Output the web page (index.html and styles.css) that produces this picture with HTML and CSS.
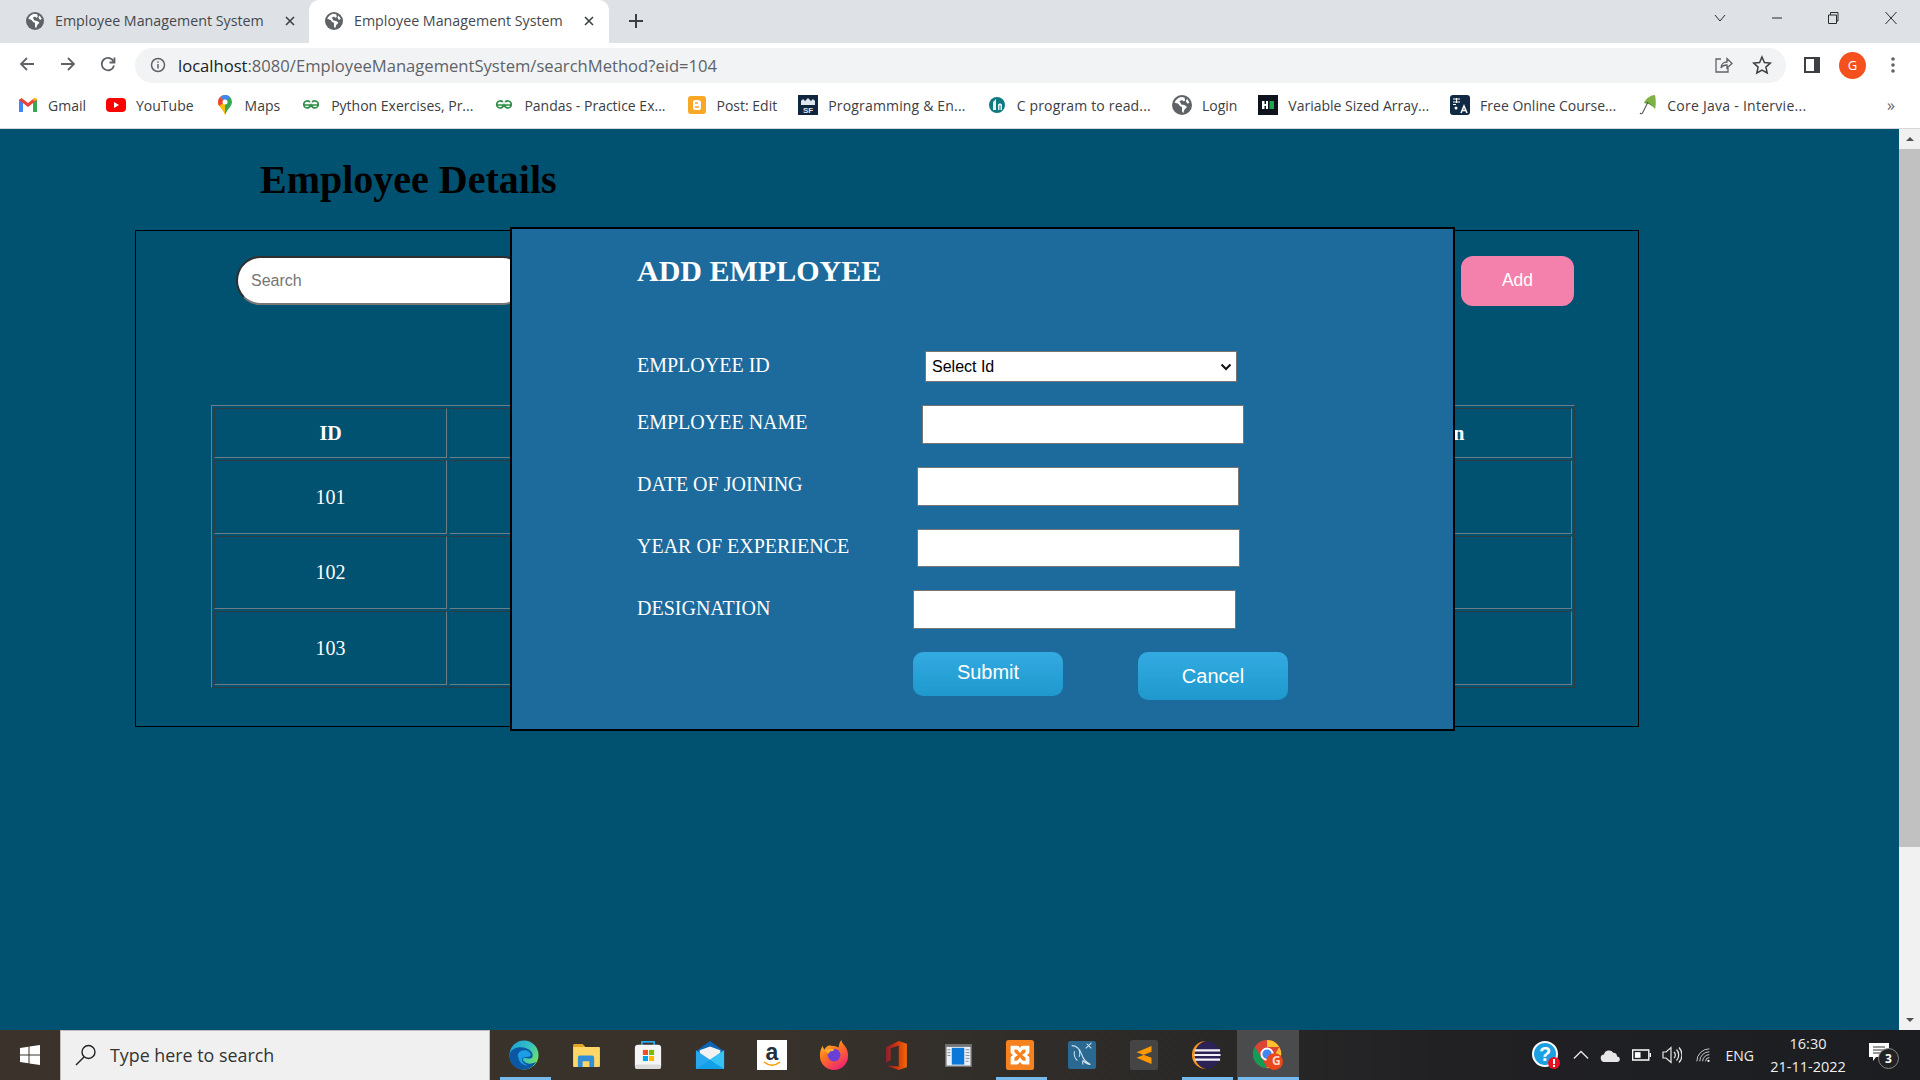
FILE: index.html
```html
<!DOCTYPE html>
<html lang="en">
<head>
<meta charset="utf-8">
<title>Employee Management System</title>
<link rel="stylesheet" href="styles.css">
</head>
<body>
<div class="tabstrip">
  <div class="tab tab-first">
    <svg class="fav" viewBox="0 0 16 16"><use href="#globe"/></svg>
    <span class="tab-title">Employee Management System</span>
    <svg class="tab-x" viewBox="0 0 12 12"><path d="M2 2l8 8M10 2l-8 8"/></svg>
  </div>
  <div class="tab tab-active">
    <svg class="fav" viewBox="0 0 16 16"><use href="#globe"/></svg>
    <span class="tab-title">Employee Management System</span>
    <svg class="tab-x" viewBox="0 0 12 12"><path d="M2 2l8 8M10 2l-8 8"/></svg>
  </div>
  <svg class="new-tab" viewBox="0 0 16 16"><path d="M8 1v14M1 8h14"/></svg>
  <div class="win-controls">
    <svg class="wc wc-chev" viewBox="0 0 14 14"><path d="M2 4l5 6 5-6"/></svg>
    <svg class="wc" viewBox="0 0 14 14"><path d="M2 7h10"/></svg>
    <svg class="wc wc-max" viewBox="0 0 14 14"><path d="M2.500 4h8v8.500h-8zM4.500 4V1.500h7.500v8.500h-1.500"/></svg>
    <svg class="wc" viewBox="0 0 14 14"><path d="M1.500 1l11 12M12.500 1l-11 12"/></svg>
  </div>
</div>
<div class="toolbar">
  <svg class="nav" viewBox="0 0 18 18"><path d="M16 9H3M9 3L3 9l6 6"/></svg>
  <svg class="nav" viewBox="0 0 18 18"><path d="M2 9h13M9 3l6 6-6 6"/></svg>
  <svg class="nav" viewBox="0 0 18 18"><path d="M14.800 7A6.200 6.200 0 1 0 15 10.500M15.500 2.500V7.500H10.500"/></svg>
  <div class="omnibox">
    <svg class="info" viewBox="0 0 16 16"><circle cx="8" cy="8" r="6.500"/><path d="M8 7v4.500M8 4.300v1.500"/></svg>
    <span class="url"><span class="url-host">localhost</span>:8080/EmployeeManagementSystem/searchMethod?eid=104</span>
    <svg class="omni-act share" viewBox="0 0 20 20"><path d="M8 4H3v13h12v-4M8 13c0-4 3-6 6-6V3.500L19 8.500l-5 4.500V10c-3 0-5 1-6 3z"/></svg>
    <svg class="omni-act star" viewBox="0 0 20 20"><path d="M10 2l2.400 5.500 5.900.600-4.400 4 1.300 5.900L10 15l-5.200 3 1.300-5.900-4.400-4 5.900-.600z"/></svg>
  </div>
  <svg class="panel-ico" viewBox="0 0 18 18"><path d="M1 1h16v16H1z" fill="#3c4043"/><path d="M3 3h8v12H3z" fill="#fff"/></svg>
  <div class="avatar">G</div>
  <svg class="dots" viewBox="0 0 4 18"><circle cx="2" cy="3" r="1.800"/><circle cx="2" cy="9" r="1.800"/><circle cx="2" cy="15" r="1.800"/></svg>
</div>
<div class="bookmarks">
  <div class="bm bm-gmail"><svg class="bm-ico" viewBox="0 0 20 20"><g transform="translate(0 2)"><path d="M1 15V3l2.500-1.500L5 4v11z" fill="#4285f4"/><path d="M15 15V4l1.500-2.500L19 3v12z" fill="#34a853"/><path d="M1 3l9 7 9-7-2.500-2L10 6 3.500 1z" fill="#ea4335"/><path d="M15 4l4-1-.5-1.500L16 1z" fill="#fbbc04"/></g></svg><span>Gmail</span></div>
  <div class="bm"><svg class="bm-ico" viewBox="0 0 20 20"><rect x="0" y="3" width="20" height="14" rx="4" fill="#f00"/><path d="M8 7l5 3-5 3z" fill="#fff"/></svg><span>YouTube</span></div>
  <div class="bm"><svg class="bm-ico" viewBox="0 0 20 20"><path d="M10 0a7 7 0 0 0-7 7c0 4.500 5 7 7 13z" fill="#fbbc04"/><path d="M10 0a7 7 0 0 1 7 7c0 4.500-5 7-7 13z" fill="#34a853"/><path d="M5 2a7 7 0 0 1 10 0l-5 5z" fill="#4285f4"/><path d="M3 7a7 7 0 0 1 2-5l5 5-6 4a8 8 0 0 1-1-4z" fill="#ea4335"/><circle cx="10" cy="7" r="2.500" fill="#fff"/></svg><span>Maps</span></div>
  <div class="bm"><svg class="bm-ico" viewBox="0 0 20 20"><use href="#gfg"/></svg><span>Python Exercises, Pr...</span></div>
  <div class="bm"><svg class="bm-ico" viewBox="0 0 20 20"><use href="#gfg"/></svg><span>Pandas - Practice Ex...</span></div>
  <div class="bm"><svg class="bm-ico" viewBox="-1 -1 20 20"><rect width="18" height="18" rx="3" fill="#f9a825"/><path d="M5 6a2 2 0 0 1 2-2h3a3 3 0 0 1 3 3v5a2 2 0 0 1-2 2H7a2 2 0 0 1-2-2z" fill="#fff"/><path d="M7 7h3M7 11h4" stroke="#f9a825" stroke-width="1.500"/></svg><span>Post: Edit</span></div>
  <div class="bm"><svg class="bm-ico" viewBox="0 0 20 20"><rect width="20" height="20" fill="#10263f"/><path d="M3 10V6l2-2 2 2 3-3 3 3 2-2 2 2v4z" fill="#dfe7ee"/><text x="10" y="17.500" class="sf-text">SF</text></svg><span class="ls-a">Programming &amp; En...</span></div>
  <div class="bm"><svg class="bm-ico" viewBox="0 0 20 20"><circle cx="10" cy="10" r="8" fill="#0f7a80"/><path d="M6 15V7l3-3v11zM11 15v-5c0-2 4-2 4 0v5h-1.500v-4.500h-1V15z" fill="#e4f4f4"/></svg><span class="ls-a">C program to read...</span></div>
  <div class="bm"><svg class="bm-ico" viewBox="0 0 16 16"><use href="#globe"/></svg><span>Login</span></div>
  <div class="bm"><svg class="bm-ico" viewBox="0 0 20 20"><rect width="20" height="20" fill="#0e141e"/><path d="M4 6h2.500v8H4zM8 6h2v8H8zM6 9h3v2H6z" fill="#fff"/><path d="M11.500 6H16v8h-4.500z" fill="#1ba94c"/></svg><span>Variable Sized Array...</span></div>
  <div class="bm"><svg class="bm-ico" viewBox="0 0 20 20"><rect width="20" height="20" rx="3" fill="#102a43"/><path d="M3 4h7M6.500 3v5M3 7h7M3 9.500h3" stroke="#fff" stroke-width="1.100"/><circle cx="6" cy="13" r="1.500" fill="#fff"/><path d="M11 18l3-7 3 7M12.200 15.500h3.600" stroke="#fff" stroke-width="1.500" fill="none"/></svg><span>Free Online Course...</span></div>
  <div class="bm"><svg class="bm-ico" viewBox="0 0 20 20"><path d="M7 8C9 3 14 0 18 0c1 5 1 11 0 14-2-3-6-6-11-6z" fill="#7cb342"/><path d="M7 8c3-1 6 0 8 2l3 4c-2-3-6-6-11-6z" fill="#558b2f"/><path d="M3 18c1 1 2 1 2.500 0L11 7" stroke="#555" stroke-width="1.100" fill="none"/></svg><span class="ls-b">Core Java - Intervie...</span></div>
  <span class="bm-more">»</span>
</div>

<div class="viewport">
  <main class="page">
    <h1 class="page-title">Employee Details</h1>
    <section class="panel">
      <div class="panel-top">
        <input class="search" type="text" placeholder="Search">
        <button class="add-btn" type="button">Add</button>
      </div>
      <table class="emp-table">
        <thead>
          <tr><th class="col-id">ID</th><th></th><th class="col-action">Action</th></tr>
        </thead>
        <tbody>
          <tr class="row-a"><td>101</td><td></td><td></td></tr>
          <tr class="row-b"><td>102</td><td></td><td></td></tr>
          <tr class="row-a"><td>103</td><td></td><td></td></tr>
        </tbody>
      </table>
    </section>
    <form class="modal">
      <h2 class="modal-title">ADD EMPLOYEE</h2>
      <div class="form-row"><label class="lbl lbl-id">EMPLOYEE ID</label><select class="sel"><option>Select Id</option></select></div>
      <div class="form-row"><label class="lbl lbl-name">EMPLOYEE NAME</label><input class="fld" type="text"></div>
      <div class="form-row"><label class="lbl lbl-date">DATE OF JOINING</label><input class="fld" type="text"></div>
      <div class="form-row"><label class="lbl lbl-date">YEAR OF EXPERIENCE</label><input class="fld fld-wide fld-short" type="text"></div>
      <div class="form-row"><label class="lbl lbl-des">DESIGNATION</label><input class="fld fld-wide" type="text"></div>
      <div class="btn-row">
        <button class="blue-btn btn-submit" type="button">Submit</button>
        <button class="blue-btn btn-cancel" type="button">Cancel</button>
      </div>
    </form>
  </main>
  <div class="scrollbar">
    <div class="sb-arrow"><svg viewBox="0 0 10 10"><path d="M1 7l4-4 4 4z"/></svg></div>
    <div class="sb-track"><div class="sb-thumb"></div></div>
    <div class="sb-arrow"><svg viewBox="0 0 10 10"><path d="M1 3l4 4 4-4z"/></svg></div>
  </div>
</div>

<footer class="taskbar">
  <div class="start"><svg viewBox="0 0 20 20"><path d="M0 3l8.500-1.200V9.500H0zM9.500 1.600L20 0v9.500H9.500zM0 10.500h8.500v7.700L0 17zM9.500 10.500H20V20L9.500 18.400z" fill="#fff"/></svg></div>
  <div class="task-search">
    <svg viewBox="0 0 22 22"><circle cx="13.500" cy="8" r="6.500"/><path d="M9 13l-8 8"/></svg>
    <span>Type here to search</span>
  </div>
  <div class="task-icons">
    <div class="ti on"><svg viewBox="0 0 32 32"><defs><linearGradient id="e1" x1="0" y1="0" x2="1" y2=".6"><stop offset="0" stop-color="#1a9fdf"/><stop offset=".6" stop-color="#35c1c1"/><stop offset="1" stop-color="#6fe06a"/></linearGradient></defs><circle cx="16" cy="16" r="15.500" fill="url(#e1)"/><path d="M.5 16C2 8 12 6 19 9c5 2 7 6 6 9-1 2-5 2-8 1-2 0-3 2-1 4 3 3 9 3 13 0-3 6-8 8.500-13 8.500C7 31.500 0 25 .5 16z" fill="#0b57a4"/><path d="M10 19c-2-6 3-9 8-8 4 1 6 4 5 6-1 1-4 1-6 1-3 0-4 3-2 6 2 2 4 3 6 3-6 1-10-3-11-8z" fill="#1c9ee4"/></svg></div>
    <div class="ti"><svg class="ico-folder" viewBox="0 0 28 24"><path d="M0 1.500A1.500 1.500 0 0 1 1.500 0H10l3 3H0z" fill="#e0a526"/><path d="M0 3h27a1 1 0 0 1 1 1v19a1 1 0 0 1-1 1H1a1 1 0 0 1-1-1z" fill="#ffd766"/><path d="M5 24V14a2 2 0 0 1 2-2h13a2 2 0 0 1 2 2v10h-5v-6h-7v6z" fill="#2f8fd8"/></svg></div>
    <div class="ti"><svg viewBox="0 0 32 32"><path d="M9.500 7V2h13v5" fill="none" stroke="#29a8f0" stroke-width="1.800"/><rect x="2" y="5" width="28" height="26" rx="3.500" fill="#f5f5f5"/><rect x="2" y="26" width="28" height="5" rx="2.500" fill="#dcdcdc"/><rect x="10" y="10" width="12" height="13" fill="#fff"/><rect x="10.500" y="10.500" width="5.500" height="5.500" fill="#f25022"/><rect x="17" y="10.500" width="5.500" height="5.500" fill="#7fba00"/><rect x="10.500" y="17" width="5.500" height="5.500" fill="#00a4ef"/><rect x="17" y="17" width="5.500" height="5.500" fill="#ffb900"/></svg></div>
    <div class="ti"><svg viewBox="0 0 32 32"><path d="M1 12L16 1l15 11v19H1z" fill="#0d63b5"/><path d="M5 11l11-4 11 4v8l-11 7-11-7z" fill="#f2f2f2"/><path d="M1 11l15 10 15-10v19a1 1 0 0 1-1 1H2a1 1 0 0 1-1-1z" fill="#2aa8ee"/><path d="M1 31l15-10 15 10z" fill="#13a0e8"/><path d="M31 11v20L16 21z" fill="#36c3f4"/></svg></div>
    <div class="ti"><div class="amz"><span>a</span><svg viewBox="0 0 20 6"><path d="M2 1c5 4 11 4 16 0" fill="none" stroke="#f90" stroke-width="1.600"/></svg></div></div>
    <div class="ti"><svg viewBox="0 0 32 32"><defs><linearGradient id="f1" x1="0" y1="0" x2=".6" y2="1"><stop offset="0" stop-color="#ffd23f"/><stop offset=".45" stop-color="#ff7a1a"/><stop offset="1" stop-color="#f0286e"/></linearGradient></defs><path d="M1 17C1 12 2 9 4 6c0 2 1 3 2 4 1-3 4-5 7-4 4 0 6 1 8 2 0-3 1-6 3-8 0 3 2 4 4 7s3 6 3 10a15 15 0 0 1-30 0z" fill="url(#f1)"/><circle cx="16" cy="16" r="6.800" fill="#6a3fd8"/><path d="M6 11c3-1 8-2 10-1 1 1-2 2-4 2l-2 3c-1-2-3-3-4-4z" fill="#ffb02e"/></svg></div>
    <div class="ti"><svg class="ico-office" viewBox="0 0 24 32"><defs><linearGradient id="o1" x1="0" y1="0" x2="1" y2="0"><stop offset="0" stop-color="#8f1f2d"/><stop offset=".5" stop-color="#d3310f"/><stop offset="1" stop-color="#f06a07"/></linearGradient></defs><path d="M1 7L15 0l9 3v26l-9 3L1 27l14 1V5L6 8v13l-5 3z" fill="url(#o1)"/></svg></div>
    <div class="ti"><svg class="ico-win" viewBox="0 0 28 24"><rect width="28" height="24" fill="#6f7175"/><rect x="1.500" y="3" width="25" height="19.500" fill="#eceff3"/><rect x="7" y="4" width="13" height="17.500" fill="#0a78d9"/><path d="M2.500 6h3M2.500 9h3M2.500 12h3M21.500 6h4M21.500 9h4M21.500 12h4M21.500 15h4M21.500 18h3" stroke="#8a8d92"/></svg></div>
    <div class="ti on"><svg viewBox="0 0 32 32"><rect x="1" y="0" width="30" height="32" rx="3" fill="#f5811f"/><path d="M6 6h7c2 0 3 2 3 3 0-1 1-3 3-3h7v7c0 2-3 3-3 3s3 1 3 3v7h-7c-2 0-3-3-3-3s-1 3-3 3H6v-7c0-2 3-3 3-3s-3-1-3-3z" fill="#fff"/><path d="M10 10h2c2 0 4 4 4 4s2-4 4-4h2v2c0 2-4 4-4 4s4 2 4 4v2h-2c-2 0-4-4-4-4s-2 4-4 4h-2v-2c0-2 4-4 4-4s-4-2-4-4z" fill="#f5811f"/></svg></div>
    <div class="ti"><svg viewBox="0 0 32 32"><rect x="1" y="1" width="30" height="30" rx="3" fill="#2a6a92"/><path d="M5 6c5 0 9 4 11 10 1 4 3 7 9 10-4 0-6-2-8-4-1 2 0 3 0 4M8 12c-1 4 0 7 3 10M12 9c2 3 2 6 1 9M21 4l5 5M26 3l-6 6" fill="none" stroke="#cfe3ee" stroke-width="1.100"/></svg></div>
    <div class="ti"><svg viewBox="0 0 32 32"><rect x="1" y="0" width="30" height="32" rx="3" fill="#454545"/><path d="M8 13l16-6.500v6L8 19zM24 19L8 13v6l16 6.500z" fill="#ff9800"/></svg></div>
    <div class="ti on"><svg viewBox="0 0 32 32"><circle cx="17" cy="16" r="14.500" fill="#2c2255"/><path d="M1 16A15 15 0 0 1 16 1C8 3 4 9 4 16s4 13 12 15A15 15 0 0 1 1 16z" fill="#f7941e"/><path d="M4 11h27M3.500 16h28M4 21h27" stroke="#f2f2f8" stroke-width="2.300"/></svg></div>
    <div class="ti on ti-active"><svg viewBox="0 0 32 32"><circle cx="15" cy="15" r="15" fill="#db4437"/><path d="M15 0a15 15 0 0 1 13 7.500H15z" fill="#fbc02d"/><path d="M28 7.500A15 15 0 0 1 15 30l6.500-11.300z" fill="#fbc02d"/><path d="M2 7.500l7 11.500 6 11A15 15 0 0 1 2 7.500z" fill="#0f9d58"/><circle cx="15" cy="15" r="6" fill="#4285f4" stroke="#fff" stroke-width="2"/><circle cx="23" cy="23" r="9" fill="#e8481c"/></svg><span class="chrome-g">G</span></div>
  </div>
  <div class="tray">
    <div class="help"><svg viewBox="0 0 28 28"><circle cx="13" cy="13" r="12" fill="#1ba1e2" stroke="#fff" stroke-width="2"/><circle cx="22" cy="22" r="6" fill="#e81123"/><rect x="21" y="18" width="2" height="5" fill="#fff"/><rect x="21" y="24" width="2" height="2" fill="#fff"/></svg><span>?</span></div>
    <svg class="tray-ico chev" viewBox="0 0 18 18"><path d="M1 13l8-8 8 8"/></svg>
    <svg class="tray-ico cloud" viewBox="0 0 22 14"><path d="M5 14a4 4 0 0 1-1-8 5.500 5.500 0 0 1 10-2 4 4 0 0 1 4 4 3 3 0 0 1 0 6z" fill="#e6e6e6"/></svg>
    <svg class="tray-ico batt" viewBox="0 0 20 12"><path d="M.7.700h17v10.600H.7z"/><path d="M3 3h6v6H3z" fill="#fff" stroke="none"/><path d="M18.500 4h1.500v4h-1.500z" fill="#fff" stroke="none"/></svg>
    <svg class="tray-ico vol" viewBox="0 0 20 18"><path d="M1 6h3l5-4.500v15L4 12H1zM12 6a4 4 0 0 1 0 6M14.500 3.500a8 8 0 0 1 0 11M17 1.500a11 11 0 0 1 0 15"/></svg>
    <svg class="tray-ico wifi" viewBox="0 0 18 18"><path d="M1 16A15 15 0 0 1 16 1M4.500 16A11.500 11.500 0 0 1 16 4.500M8 16a8 8 0 0 1 8-8M11.500 16a4.500 4.500 0 0 1 4.500-4.500"/><circle cx="15" cy="15.500" r="1.300" fill="#fff" stroke="none"/></svg>
    <span class="lang">ENG</span>
    <div class="clock"><span>16:30</span><span>21-11-2022</span></div>
    <div class="notif"><svg viewBox="0 0 20 18"><path d="M0 0h20v14H7l-3 4v-4H0z" fill="#fff"/><path d="M4 4h12M4 7h12M4 10h8" stroke="#333" stroke-width="1"/></svg><span class="notif-n">3</span></div>
  </div>
</footer>

<svg class="defs" width="0" height="0">
  <defs>
    <symbol id="globe" viewBox="0 0 16 16"><circle cx="8" cy="8" r="8" fill="#5f6368"/><path d="M7 1.500C5 2 3 3.500 2 6l3 1 1.500 2 1.500.500v3.500l1 1.500 1-3 2-2-2-1.500-2.500-.500L6 5l2-1 1 1 1.500-.500-.5-2.500z" fill="#fff"/><path d="M12 3l2 3-1.500 1-1.500-2z" fill="#fff"/></symbol>
    <symbol id="gfg" viewBox="0 0 20 20"><path d="M10 10H3.500M10 10h6.500M9 7C7 5.500 4 5.500 3 8c-1 3 1 5 3 5s3-1 4-3c1 2 2 3 4 3s4-2 3-5c-1-2.500-4-2.500-6-1" fill="none" stroke="#2f8d46" stroke-width="1.700"/></symbol>
  </defs>
</svg>
</body>
</html>
```
FILE: styles.css
```css
* { box-sizing: border-box; }
html, body { margin: 0; height: 100%; overflow: hidden; }
body {
  width: 1920px; height: 1080px;
  display: flex; flex-direction: column;
  font-family: "Open Sans", "Liberation Sans", sans-serif;
  background: #015270;
}
.defs { position: absolute; }

/* browser chrome */
.tabstrip {
  height: 43px; flex: none;
  display: flex; align-items: flex-end;
  background: #dee1e6;
  padding-left: 9px;
}
.tab {
  width: 300px; height: 43px;
  display: flex; align-items: center;
  padding: 0 0 2px 17px;
  color: #45494d;
  font-size: 14.250px;
}
.tab-active { background: #fff; border-radius: 10px 10px 0 0; padding-left: 16px; }
.fav { width: 18px; height: 18px; flex: none; }
.tab-title { margin-left: 11px; width: 208px; white-space: nowrap; }
.tab-x { width: 12px; height: 12px; margin-left: 21px; fill: none; stroke: #3c4043; stroke-width: 1.600; }
.new-tab { width: 16px; height: 16px; margin: 0 0 14px 19px; stroke: #3c4043; stroke-width: 2; fill: none; }
.win-controls { margin-left: auto; display: flex; align-items: center; align-self: flex-start; gap: 42px; padding: 11px 22px 0 0; }
.wc { width: 14px; height: 14px; stroke: #2b2b2b; stroke-width: 1; fill: none; }
.wc-chev { margin-right: 1px; }
.wc-max { margin-right: 2px; }

.toolbar {
  height: 41px; flex: none;
  display: flex; align-items: center;
  background: #fff;
  padding: 0 0 0 18px;
}
.nav { width: 18px; height: 18px; margin-right: 22.500px; stroke: #5f6368; stroke-width: 1.800; fill: none; flex: none; }
.omnibox {
  width: 1651px; height: 35px; margin: 3px 0 0 -4.500px; flex: none;
  background: #f1f3f4; border-radius: 18px;
  display: flex; align-items: center;
  padding: 0 14px 0 15px;
}
.info { width: 16px; height: 16px; stroke: #5f6368; stroke-width: 1.500; fill: none; flex: none; }
.url { margin-left: 12px; font-size: 16.600px; color: #5f6368; white-space: nowrap; }
.url-host { color: #202124; }
.omni-act { width: 20px; height: 20px; stroke: #5f6368; stroke-width: 1.300; fill: none; flex: none; }
.share { margin-left: auto; }
.star { margin-left: 19px; stroke: #3c4043; stroke-width: 1.500; }
.panel-ico { width: 18px; height: 18px; margin: 3px 0 0 17px; flex: none; }
.avatar {
  width: 27px; height: 27px; margin: 3px 0 0 18px; flex: none;
  border-radius: 50%; background: #f4511e; color: #fff;
  font-size: 13px; display: flex; align-items: center; justify-content: center;
}
.dots { width: 4px; height: 18px; margin: 3px 0 0 25px; fill: #5f6368; flex: none; }

.bookmarks {
  height: 45px; flex: none;
  display: flex; align-items: center; gap: 21px;
  background: #fff;
  padding: 0 0 2px 18px;
  color: #3c4043;
  font-size: 14px;
  border-bottom: 1px solid #d5d7da;
}
.bm { display: flex; align-items: center; gap: 10px; white-space: nowrap; }
.bm-gmail { margin-right: -1px; }
.bm-ico { width: 20px; height: 20px; flex: none; }
.ls-a { letter-spacing: .17px; }
.ls-b { letter-spacing: .27px; }
.sf-text { font: bold 8px "Liberation Sans", sans-serif; fill: #dfe7ee; text-anchor: middle; }
.bm-more { margin-left: auto; margin-right: 25px; font-size: 16px; color: #5f6368; }

/* page */
.viewport { flex: 1; display: flex; min-height: 0; }
.page { flex: 1; position: relative; background: #015270; padding: 0 0 0 135px; }
.page-title {
  margin: 24px 0 0 125px;
  font: bold 40px/54px "Liberation Serif", serif;
  color: #000;
}
.panel {
  width: 1504px; height: 497px; margin-top: 23px;
  border: 1px solid #000;
  padding: 25px 64px 0 100px;
}
.panel-top { display: flex; justify-content: space-between; align-items: flex-start; }
.search {
  width: 291px; height: 49px;
  border-radius: 25px;
  border: 2px solid; border-color: #2f2f2f #777 #777 #2f2f2f;
  background: #fff;
  padding: 0 13px;
  font: 16px "Liberation Sans", sans-serif;
}
.search::placeholder { color: #757575; }
.add-btn {
  width: 113px; height: 50px;
  border: 0; border-radius: 12px; padding: 0 0 2px;
  background: #f481ac; color: #fff;
  font: 17.500px "Liberation Sans", sans-serif;
}
.emp-table {
  width: 1364px; margin: 99px 0 0 -25px;
  table-layout: fixed;
  border-collapse: separate; border-spacing: 2px;
  border: 1px solid; border-color: #6d7d86 #2f3b42 #2f3b42 #6d7d86;
  color: #fff;
  font: 20px "Liberation Serif", serif;
}
.emp-table th, .emp-table td {
  padding: 0; text-align: center;
  border: 1px solid; border-color: #2f3b42 #6d7d86 #6d7d86 #2f3b42;
}
.emp-table th { height: 50px; font-weight: bold; }
.col-id { width: 233px; }
.col-action { width: 272px; }
.row-a td { height: 74px; }
.row-b td { height: 73px; }

.modal {
  position: absolute; left: 510px; top: 98px;
  width: 945px; height: 504px;
  background: #1d6a9c;
  border: 2px solid #000;
  padding: 0 0 0 125px;
  color: #fff;
  font-family: "Liberation Serif", serif;
}
.modal-title { margin: 22px 0 0; font: bold 30px/40px "Liberation Serif", serif; }
.form-row { display: flex; align-items: center; margin-top: 23px; font-size: 20px; }
.modal-title + .form-row { margin-top: 60px; }
.lbl { margin-bottom: 4px; flex: none; }
.lbl-id { width: 288px; margin-bottom: 2px; }
.lbl-name { width: 285px; }
.lbl-date { width: 280px; }
.lbl-des { width: 276px; margin-bottom: 2px; }
.sel {
  width: 312px; height: 31px; padding: 0 2px 0 6px;
  background: #fff url("data:image/svg+xml,%3Csvg xmlns='http://www.w3.org/2000/svg' width='12' height='8'%3E%3Cpath d='M1.500 1.500L6 6l4.500-4.500' fill='none' stroke='%23111' stroke-width='2'/%3E%3C/svg%3E") no-repeat right 4px center;
  appearance: none;
  color: #000;
  border: 1px solid #767676; border-radius: 0;
  font: 16px "Liberation Sans", sans-serif;
}
.fld {
  width: 322px; height: 39px;
  background: #fff;
  border: 1px solid #767676;
  border-radius: 0;
}
.fld-wide { width: 323px; }
.fld-short { height: 38px; }
.btn-row { display: flex; align-items: flex-start; gap: 75px; margin: 23px 0 0 276px; }
.blue-btn {
  width: 150px; border: 0; border-radius: 10px;
  background: linear-gradient(#33abe2, #1e98cd);
  color: #fff;
  font: 20px "Liberation Sans", sans-serif;
}
.btn-submit { height: 44px; padding-bottom: 4px; }
.btn-cancel { height: 48px; }

.scrollbar { width: 21px; flex: none; background: #f1f1f1; display: flex; flex-direction: column; }
.sb-arrow { height: 20px; flex: none; display: flex; align-items: center; justify-content: center; }
.sb-arrow svg { width: 10px; height: 10px; fill: #505050; }
.sb-track { flex: 1; }
.sb-thumb { height: 698px; background: #c1c1c1; }

/* taskbar */
.taskbar {
  height: 50px; flex: none;
  display: flex; align-items: stretch;
  background: linear-gradient(90deg, #3b332b 0%, #38322b 40%, #2c2a28 60%, #212124 75%, #1b1d20 100%);
  color: #fff;
}
.start { width: 60px; display: flex; align-items: center; justify-content: center; }
.start svg { width: 20px; height: 20px; }
.task-search {
  width: 430px; flex: none;
  background: #f0f0f0;
  border: 1px solid #bdbdbd; border-bottom: 0;
  display: flex; align-items: center;
  padding: 0 0 2px 14px;
  color: #333;
  font-size: 17.850px;
}
.task-search svg { width: 22px; height: 22px; stroke: #222; stroke-width: 1.400; fill: none; flex: none; margin-right: 13px; }
.task-icons { display: flex; margin-left: 3px; }
.ti {
  width: 62px; position: relative;
  display: flex; align-items: center; justify-content: center;
}
.ti > svg { width: 30px; height: 30px; }
.ti > .ico-folder { width: 27px; height: 23px; }
.ti > .ico-office { width: 22px; height: 29px; }
.ti > .ico-win { width: 27px; height: 23px; }
.ti.on::after {
  content: ""; position: absolute; left: 7px; right: 4px; bottom: 0; height: 3px;
  background: #76b9ed;
}
.ti-active { background: #4a4b4d; }
.ti-active.on::after { left: 1px; right: 0; }
.chrome-g { position: absolute; left: 35px; top: 22px; font-size: 12px; font-weight: 700; color: #ffd9c8; }
.amz {
  width: 30px; height: 30px; background: #fff;
  position: relative; display: flex; justify-content: center;
  color: #232f3e; font: bold 23px/24px "Liberation Sans", sans-serif;
}
.amz svg { position: absolute; left: 5px; bottom: 3px; width: 20px; height: 6px; }

.tray { margin-left: auto; display: flex; align-items: center; padding-right: 17px; }
.help { position: relative; width: 28px; height: 28px; }
.help svg { width: 28px; height: 28px; display: block; }
.help span { position: absolute; left: 7px; top: 1px; font: bold 20px/24px "Liberation Sans", sans-serif; color: #fff; }
.tray-ico { flex: none; stroke: #e8e8e8; stroke-width: 1.200; fill: none; }
.chev { width: 16px; height: 16px; margin-left: 13px; stroke-width: 1.400; }
.cloud { width: 21px; height: 13px; margin-left: 10.500px; stroke: none; }
.batt { width: 19px; height: 12px; margin-left: 11px; stroke: #fff; stroke-width: 1.400; }
.vol { width: 20px; height: 18px; margin-left: 11px; }
.wifi { width: 15px; height: 15px; margin-left: 14px; stroke-width: 1; }
.lang { margin-left: 15px; font-size: 14px; color: #eee; }
.clock { width: 90px; margin-left: 9px; display: flex; flex-direction: column; align-items: center; font-size: 14.500px; line-height: 23px; color: #eee; }
.notif { position: relative; width: 34px; height: 30px; margin-left: 16px; }
.notif svg { width: 20px; height: 18px; position: absolute; left: 0; top: 3px; }
.notif-n {
  position: absolute; left: 9px; top: 8px;
  width: 21px; height: 21px; border-radius: 50%;
  border: 1px solid #888; background: #222;
  font-size: 12px; font-weight: 700; line-height: 19px; text-align: center;
}
```
